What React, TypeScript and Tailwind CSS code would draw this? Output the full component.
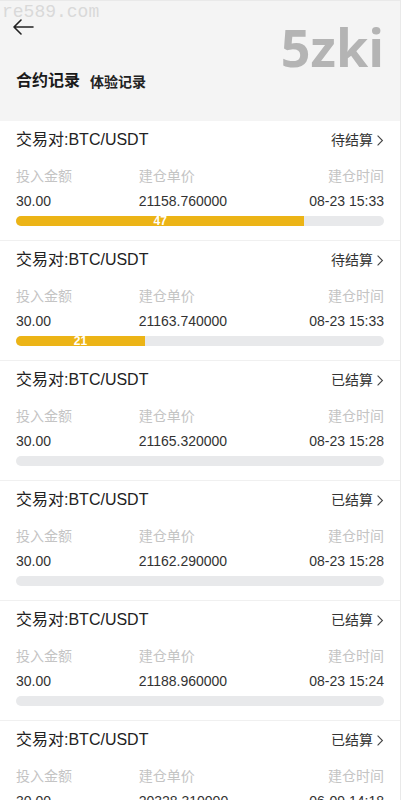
import React from 'react';

type Order = {
  status: string;
  amount: string;
  price: string;
  time: string;
  seconds?: number;
};

const orders: Order[] = [
  { status: '待结算', amount: '30.00', price: '21158.760000', time: '08-23 15:33', seconds: 47 },
  { status: '待结算', amount: '30.00', price: '21163.740000', time: '08-23 15:33', seconds: 21 },
  { status: '已结算', amount: '30.00', price: '21165.320000', time: '08-23 15:28' },
  { status: '已结算', amount: '30.00', price: '21162.290000', time: '08-23 15:28' },
  { status: '已结算', amount: '30.00', price: '21188.960000', time: '08-23 15:24' },
  { status: '已结算', amount: '30.00', price: '20328.310000', time: '06-09 14:18' },
];

function OrderCard({ order }: { order: Order }) {
  const pct = order.seconds ? (order.seconds / 60) * 100 : 0;
  return (
    <div className="bg-white px-4 pt-[7px] pb-[14px] border-b border-[#f0f0f0]">
      <div className="flex items-center justify-between h-6">
        <span className="text-[16px] text-[#222]">交易对:BTC/USDT</span>
        <span className="flex items-center text-[14px] text-[#333]">
          {order.status}
          <svg viewBox="0 0 10 16" className="w-[8px] h-[13px] ml-[3px]" fill="none" stroke="#444" strokeWidth="1.4">
            <path d="M2 2 L8 8 L2 14" />
          </svg>
        </span>
      </div>
      <div className="grid grid-cols-3 mt-[14px] text-[14px] leading-5 text-[#c4c4c4]">
        <span>投入金额</span>
        <span>建仓单价</span>
        <span className="text-right">建仓时间</span>
      </div>
      <div className="grid grid-cols-3 mt-[5px] text-[14px] leading-5 text-[#333]">
        <span>{order.amount}</span>
        <span>{order.price}</span>
        <span className="text-right">{order.time}</span>
      </div>
      <div className="mt-[5px] h-[10px] rounded-[5px] bg-[#e8e9eb] flex">
        {order.seconds ? (
          <div
            className="h-full bg-[#ecb416] rounded-l-[5px] flex items-center justify-center text-[12px] leading-[12px] font-bold text-white"
            style={{ width: `${pct}%` }}
          >
            {order.seconds}
          </div>
        ) : null}
      </div>
    </div>
  );
}

export default function App() {
  return (
    <div className="w-[405px] h-[800px] overflow-hidden bg-white font-['Liberation_Sans','Noto_Sans_CJK_SC',sans-serif]">
      <div className="w-[401px] border-t border-r border-[#e9e9e9] bg-white">
        {/* Header */}
        <div className="relative h-[120px] bg-[#f4f4f4]">
          <span className="absolute left-[2px] top-[1px] font-['Liberation_Mono',monospace] text-[18px] leading-5 text-[#d9d9d9]">
            re589.com
          </span>
          <div className="absolute right-[16px] top-[14px] font-['Open_Sans',sans-serif] font-bold text-[52px] leading-[64px] text-[#b4b4b4]">
            5zki
          </div>
          <div className="pl-3 pt-[18px]">
            <svg viewBox="0 0 22 16" className="w-[22px] h-[16px]" fill="none" stroke="#222" strokeWidth="1.6" strokeLinecap="round" strokeLinejoin="round">
              <path d="M21 8 H2 M9 1 L2 8 L9 15" />
            </svg>
          </div>
          <div className="flex items-end gap-[10px] pl-4 mt-[34px]">
            <span className="text-[16px] font-bold text-[#1a1a1a] leading-6">合约记录</span>
            <span className="text-[14px] font-bold text-[#222] leading-[22px]">体验记录</span>
          </div>
        </div>

        {/* Records */}
        <div>
          {orders.map((o, i) => (
            <OrderCard key={i} order={o} />
          ))}
        </div>
      </div>
    </div>
  );
}
